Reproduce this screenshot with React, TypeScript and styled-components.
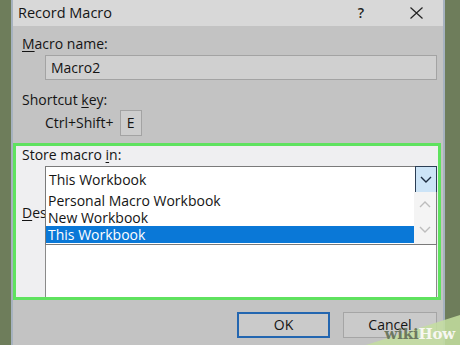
import React from "react";
import styled, { createGlobalStyle } from "styled-components";

const Global = createGlobalStyle`
  html, body { margin: 0; padding: 0; }
  body { width: 460px; height: 345px; overflow: hidden; font-family: "Open Sans", "Noto Sans", sans-serif; }
  * { box-sizing: border-box; }
`;

const Screen = styled.div`
  position: relative;
  width: 460px;
  height: 345px;
  display: flex;
  background: #6f7e5c;
  overflow: hidden;
`;

const Strip = styled.div<{ $w: number }>`
  width: ${(p) => p.$w}px;
  flex: none;
  background: #6e7d5b;
`;

const Edge = styled.div`
  width: 2px;
  flex: none;
  background: #a6b2bf;
`;

const Dialog = styled.div`
  flex: 1;
  display: flex;
  flex-direction: column;
  background: #c3c3c3;
  color: #141414;
  font-size: 14px;
  line-height: 18px;
`;

const TitleBar = styled.div`
  height: 26px;
  flex: none;
  display: flex;
  align-items: center;
  padding-left: 5px;
  background: #d8d8d8;
`;

const Title = styled.span`
  font-size: 14.5px;
  color: #151515;
`;

const TitleButtons = styled.div`
  margin-left: auto;
  display: flex;
  align-items: center;
  gap: 46px;
  padding-right: 20px;
`;

const Help = styled.span`
  font-size: 14px;
  font-weight: 600;
  color: #222;
`;

const Section = styled.div`
  display: flex;
  flex-direction: column;
  padding: 0 6px 0 9px;
`;

const Label = styled.div<{ $mt?: number }>`
  margin-top: ${(p) => p.$mt ?? 0}px;
  height: 18px;
  white-space: nowrap;
`;

const U = styled.span`
  text-decoration: underline;
  text-underline-offset: 2px;
`;

const TextField = styled.div`
  margin: 2px 0 0 23px;
  height: 25px;
  display: flex;
  align-items: center;
  padding-left: 5px;
  background: #d0d0d0;
  border: 1px solid #a3a3a3;
`;

const ShortcutRow = styled.div`
  margin: 1px 0 0 23px;
  height: 26px;
  display: flex;
  align-items: center;
  gap: 6px;
`;

const KeyBox = styled.div`
  width: 22px;
  height: 26px;
  display: flex;
  align-items: center;
  justify-content: center;
  background: #cdcdcd;
  border: 1px solid #a3a3a3;
`;

const Highlight = styled.div`
  margin: 7px 2px 0 0;
  height: 157px;
  border: 3px solid #5fe25f;
  background: #efeff1;
  display: flex;
  flex-direction: column;
  padding-left: 6px;
`;

const Combo = styled.div`
  position: relative;
  margin: 2px 1px 0 23px;
  height: 27px;
  display: flex;
  align-items: center;
  background: #fff;
  border: 1px solid #7a7a7a;
`;

const ComboText = styled.span`
  flex: 1;
  padding-left: 3px;
`;

const ComboButton = styled.div`
  width: 22px;
  align-self: stretch;
  margin: -1px -1px -1px 0;
  display: flex;
  align-items: center;
  justify-content: center;
  background: #cce4f7;
  border: 1px solid #2b3e55;
`;

const DescBox = styled.div`
  margin: 0 1px 0 23px;
  flex: 1;
  background: #fff;
  border: 1px solid #8a8a8a;
  border-bottom: none;
`;

const List = styled.div`
  position: absolute;
  top: 100%;
  left: -1px;
  right: -1px;
  height: 53px;
  display: flex;
  background: #fff;
  border: 1px solid #7a7a7a;
  border-top: none;
  z-index: 2;
`;

const Items = styled.div`
  flex: 1;
  display: flex;
  flex-direction: column;
`;

const Item = styled.div<{ $sel?: boolean }>`
  height: 17px;
  line-height: 17px;
  padding-left: 2px;
  white-space: nowrap;
  background: ${(p) => (p.$sel ? "#0a78d7" : "transparent")};
  color: ${(p) => (p.$sel ? "#fff" : "#141414")};
`;

const ScrollBar = styled.div`
  width: 22px;
  display: flex;
  flex-direction: column;
  background: #f4f4f4;
`;

const ScrollArrow = styled.div`
  height: 25px;
  display: flex;
  align-items: center;
  justify-content: center;
`;

const ButtonRow = styled.div`
  display: flex;
  justify-content: flex-end;
  gap: 13px;
  padding: 12px 6px 0 0;
`;

const Button = styled.div<{ $def?: boolean }>`
  width: ${(p) => (p.$def ? 93 : 94)}px;
  height: 26px;
  display: flex;
  align-items: center;
  justify-content: center;
  background: #cacaca;
  border: ${(p) => (p.$def ? "2px solid #2366b0" : "1px solid #a5a5a5")};
`;

const Watermark = styled.div`
  position: absolute;
  right: 0;
  bottom: 0;
  width: 100px;
  height: 52px;
  pointer-events: none;
`;

const WaterShape = styled.svg`
  position: absolute;
  inset: 0;
`;

const WaterText = styled.div`
  position: absolute;
  right: 5px;
  bottom: 2px;
  font-family: "DejaVu Serif", "Liberation Serif", serif;
  font-weight: bold;
  font-size: 15px;
  line-height: 17px;
  letter-spacing: -0.2px;
`;

const Wiki = styled.span`
  color: #6c7860;
`;

const How = styled.span`
  color: #f7f7f2;
`;

const Chevron = ({ up, color }: { up?: boolean; color: string }) => (
  <svg width="12" height="7" viewBox="0 0 12 7">
    <path
      d={up ? "M1 6 L6 1 L11 6" : "M1 1 L6 6 L11 1"}
      fill="none"
      stroke={color}
      strokeWidth="1.4"
    />
  </svg>
);

export default function App() {
  return (
    <>
      <Global />
      <Screen>
        <Strip $w={11} />
        <Edge />
        <Dialog>
          <TitleBar>
            <Title>Record Macro</Title>
            <TitleButtons>
              <Help>?</Help>
              <svg width="13" height="12" viewBox="0 0 13 12">
                <path d="M0.5 0.5 L12.5 11.5 M12.5 0.5 L0.5 11.5" stroke="#222" strokeWidth="1.2" />
              </svg>
            </TitleButtons>
          </TitleBar>
          <Section>
            <Label $mt={9}>
              <U>M</U>acro name:
            </Label>
            <TextField>Macro2</TextField>
            <Label $mt={11}>
              Shortcut <U>k</U>ey:
            </Label>
            <ShortcutRow>
              <span>Ctrl+Shift+</span>
              <KeyBox>E</KeyBox>
            </ShortcutRow>
          </Section>
          <Highlight>
            <Label>
              Store macro <U>i</U>n:
            </Label>
            <Combo>
              <ComboText>This Workbook</ComboText>
              <ComboButton>
                <Chevron color="#1c2c40" />
              </ComboButton>
              <List>
                <Items>
                  <Item>Personal Macro Workbook</Item>
                  <Item>New Workbook</Item>
                  <Item $sel>This Workbook</Item>
                </Items>
                <ScrollBar>
                  <ScrollArrow>
                    <Chevron up color="#bdbdbd" />
                  </ScrollArrow>
                  <ScrollArrow>
                    <Chevron color="#bdbdbd" />
                  </ScrollArrow>
                </ScrollBar>
              </List>
            </Combo>
            <Label $mt={11}>
              <U>D</U>escription:
            </Label>
            <DescBox />
          </Highlight>
          <ButtonRow>
            <Button $def>OK</Button>
            <Button>Cancel</Button>
          </ButtonRow>
        </Dialog>
        <Edge />
        <Strip $w={15} />
        <Watermark>
          <WaterShape width="100" height="52" viewBox="0 0 100 52">
            <polygon points="6,52 100,22 100,52" fill="rgba(196,222,160,0.85)" />
          </WaterShape>
          <WaterText>
            <Wiki>wiki</Wiki>
            <How>How</How>
          </WaterText>
        </Watermark>
      </Screen>
    </>
  );
}
